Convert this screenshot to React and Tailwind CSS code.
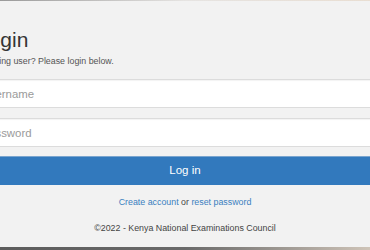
export default function App() {
  return (
    <div
      className="w-[370px] h-[250px] overflow-hidden bg-[#f2f2f2] flex flex-col"
      style={{ fontFamily: '"Liberation Sans", Arial, sans-serif' }}
    >
      <div className="h-px shrink-0 bg-gradient-to-r from-[#9a9a9a] via-[#e6e4e2] to-[#e9ded2]" />
      <div className="flex-1 flex flex-col">
        <div className="-ml-[30px] w-[430px] flex flex-col">
          <h2 className="mt-[28px] pl-[7px] text-[21px] leading-[22px] text-[#353535]">Login</h2>
          <p className="mt-[4px] pl-[10px] text-[8.86px] leading-[12px] text-[#555]">
            Existing user? Please login below.
          </p>
          <input
            readOnly
            placeholder="Username"
            className="mt-[12px] h-[29px] w-full bg-white border border-[#dcdcdc] px-[10.5px] text-[11.4px] outline-none placeholder:text-[#9a9a9a] shadow-[inset_0_1px_1px_rgba(0,0,0,0.05)]"
          />
          <input
            readOnly
            placeholder="Password"
            className="mt-[10px] h-[29px] w-full bg-white border border-[#dcdcdc] px-[10.5px] text-[11.4px] outline-none placeholder:text-[#9a9a9a] shadow-[inset_0_1px_1px_rgba(0,0,0,0.05)]"
          />
          <div className="mt-[9px] h-[29px] w-full bg-[#3279bd] border-t border-[#7aa5cf] flex items-center justify-center text-white text-[11.5px]">
            Log in
          </div>
          <p className="mt-[11px] text-center text-[8.86px] leading-[12px] text-[#444]">
            <span className="text-[#3a7fbf]">Create account</span> or{" "}
            <span className="text-[#3a7fbf]">reset password</span>
          </p>
          <p className="mt-[14px] text-center text-[8.86px] leading-[12px] text-[#444]">
            ©2022 - Kenya National Examinations Council
          </p>
        </div>
      </div>
      <div className="h-[3px] shrink-0 bg-gradient-to-r from-[#5c5c5c] via-[#6a6a6a] to-[#cfc4b8]" />
    </div>
  );
}
